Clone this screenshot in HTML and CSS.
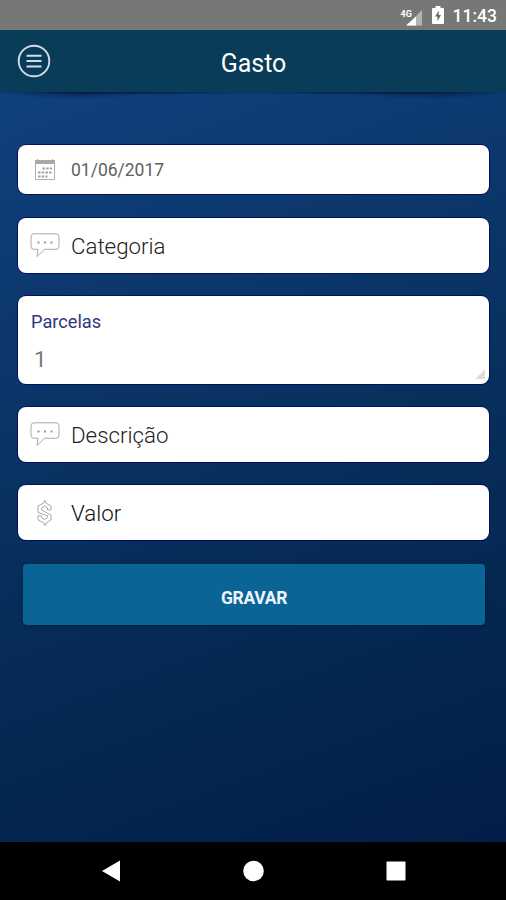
FILE: index.html
```
<!DOCTYPE html>
<html lang="pt-BR">
<head>
  <meta charset="UTF-8">
  <meta name="viewport" content="width=device-width, initial-scale=1">
  <title>Gasto</title>
  <link rel="stylesheet" href="styles.css">
</head>
<body>
  <div class="status-bar">
    <svg class="signal" width="24" height="20" viewBox="0 0 24 20">
      <path d="M22 2v15.500h-15z" fill="#b4b4b4"/>
      <path d="M16 8.500v9H6z" fill="#fff"/>
      <text x="0.5" y="8.700">4G</text>
    </svg>
    <svg class="battery" width="12" height="18" viewBox="0 0 12 18">
      <path d="M3.500 0h5v2H11q1 0 1 1v14q0 1-1 1H1q-1 0-1-1V3q0-1 1-1h2.500z" fill="#fff"/>
      <path d="M7 4.500L3 10.500h2.500V15L9 9H6.500z" fill="#666"/>
    </svg>
    <span class="clock">11:43</span>
  </div>

  <header class="header">
    <button class="menu" aria-label="Menu">
      <svg width="34" height="34" viewBox="0 0 34 34" fill="none" stroke="#d5dbe9">
        <circle cx="17" cy="17" r="15.300" stroke-width="1.900"/>
        <path d="M9.500 11.800h15M9.500 17.100h15M9.500 22.400h15" stroke-width="2"/>
      </svg>
    </button>
    <h1>Gasto</h1>
  </header>

  <form class="content">
    <div class="field date">
      <svg class="icon" width="30" height="26" viewBox="0 0 30 26">
        <path d="M5 3h20v4H5z" fill="#a8a8a8"/>
        <path d="M7.500 2v3M22.500 2v3" stroke="#a8a8a8"/>
        <path d="M5.500 7v15.500h19V7" fill="none" stroke="#b0b0b0"/>
        <path d="M12.500 11.500h9.500M8 15.500h14M8 19.500h9.500" stroke="#a2a2a2" stroke-width="2" stroke-dasharray="2.500 1.200" fill="none"/>
      </svg>
      <input type="text" value="01/06/2017">
    </div>

    <div class="field">
      <svg class="icon" width="30" height="26" viewBox="0 0 30 26">
        <path class="line" d="M4 .8h22q3 0 3 3v9.500q0 3-3 3H14.500L7 23.500l1-7.200H4q-3 0-3-3V3.800q0-3 3-3z"/>
        <path d="M7.500 9.500h2M14 9.500h2M20.500 9.500h2" stroke="#999" stroke-width="1.800"/>
      </svg>
      <input type="text" placeholder="Categoria">
    </div>

    <div class="field parcels">
      <label for="parcelas">Parcelas</label>
      <input type="text" id="parcelas" value="1">
      <span class="corner"></span>
    </div>

    <div class="field">
      <svg class="icon" width="30" height="26" viewBox="0 0 30 26">
        <path class="line" d="M4 .8h22q3 0 3 3v9.500q0 3-3 3H14.500L7 23.500l1-7.200H4q-3 0-3-3V3.800q0-3 3-3z"/>
        <path d="M7.500 9.500h2M14 9.500h2M20.500 9.500h2" stroke="#999" stroke-width="1.800"/>
      </svg>
      <input type="text" placeholder="Descrição">
    </div>

    <div class="field value">
      <svg class="icon" width="30" height="26" viewBox="0 0 30 26">
        <path class="line" d="M14 .8h1.500v2l5.500 3.200v4h-3.500V8l-3-1.800-3 1.800v2l9.500 5v5l-5 3v2h-2v-2l-6-3.200v-4H11.500v2l3 1.800 3-1.800v-2L8 12.500V6l6-3.200z"/>
      </svg>
      <input type="text" placeholder="Valor">
    </div>

    <button type="button" class="save">GRAVAR</button>
  </form>

  <nav class="nav-bar">
    <svg width="20" height="22" viewBox="0 0 20 22"><path d="M1 11L19 .5v21z"/></svg>
    <svg width="22" height="22" viewBox="0 0 22 22"><circle cx="10.500" cy="11" r="10.300"/></svg>
    <svg width="20" height="20" viewBox="0 0 20 20"><rect x=".5" y=".5" width="19" height="19" rx="1"/></svg>
  </nav>
</body>
</html>
```
FILE: styles.css
```
* {
  box-sizing: border-box;
}
body {
  display: flex;
  flex-direction: column;
  height: 100vh;
  margin: 0;
  overflow: hidden;
  background: linear-gradient(160deg, #10407f 8%, #08315f 48%, #042850 70%, #021c46 100%);
  font-family: Roboto, sans-serif;
}
.status-bar {
  display: flex;
  align-items: center;
  justify-content: flex-end;
  height: 30px;
  padding-right: 9px;
  background-color: #777;
  color: #fff;
}
.signal {
  margin: 5px 8px 0 0;
}
.signal text {
  fill: #fff;
  font-size: 9px;
  font-weight: 700;
}
.battery {
  margin-right: 9px;
}
.clock {
  font-size: 17.5px;
  font-weight: 500;
  line-height: 30px;
  padding-top: 2px;
}
.header {
  position: relative;
  display: grid;
  grid-template-columns: 51px 1fr 51px;
  align-items: center;
  height: 62px;
  background-color: #093c59;
}
/* curved shadow under the header */
.header::after {
  content: "";
  position: absolute;
  top: 100%;
  left: 0;
  width: 100%;
  height: 9px;
  background:
    radial-gradient(ellipse 75px 8px at 15% 0, rgba(0, 15, 40, 0.45), transparent),
    radial-gradient(ellipse 75px 8px at 85% 0, rgba(0, 15, 40, 0.45), transparent),
    radial-gradient(ellipse 150px 3px at 26% 0, rgba(0, 15, 40, 0.7), transparent),
    radial-gradient(ellipse 150px 3px at 74% 0, rgba(0, 15, 40, 0.7), transparent);
}
.menu {
  padding: 0 0 0 17px;
  border: none;
  background: none;
}
.menu svg {
  display: block;
}
h1 {
  margin: 4px 0 0 1px;
  color: #fff;
  font-size: 25px;
  font-weight: 400;
  text-align: center;
}
.content {
  flex: 1;
  padding: 53px 17px 0 18px;
}
.field {
  position: relative;
  display: flex;
  align-items: center;
  height: 55px;
  margin-bottom: 23px;
  padding-left: 12px;
  border-radius: 8px;
  background-color: #fff;
  box-shadow: 0 0 0 1px rgba(0, 0, 95, 0.7);
}
.field input {
  flex: 1;
  min-width: 0;
  margin-left: 11px;
  padding: 1px 0 0;
  border: none;
  outline: none;
  background: none;
  color: #555;
  font: 300 22.3px Roboto, sans-serif;
}
.field input::placeholder {
  color: #222;
  opacity: 1;
}
.date {
  height: 49px;
  margin-bottom: 24px;
}
.field.date input {
  color: #606060;
  font-size: 17.5px;
  font-weight: 400;
}
.line {
  fill: none;
  stroke: #aaa;
  stroke-width: 1;
}
.parcels {
  display: block;
  height: 88px;
  padding: 15px 13px;
}
.parcels label {
  display: block;
  color: #303681;
  font-size: 18.2px;
  line-height: 21px;
}
.field.parcels input {
  display: block;
  width: 100%;
  height: 28px;
  margin: 12px 0 0 3px;
  color: #777;
  font-weight: 400;
}
.corner {
  position: absolute;
  right: 4px;
  bottom: 5px;
  border: 5px solid transparent;
  border-right-color: #ddd;
  border-bottom-color: #ddd;
}
.value input::placeholder {
  color: #111;
}
.save {
  display: block;
  width: 462px;
  height: 61px;
  margin: 24px 0 0 5px;
  padding: 6px 0 0;
  border: none;
  border-radius: 4px;
  background-color: #0b6496;
  box-shadow: 0 1px 4px rgba(0, 0, 40, 0.3);
  color: #edf4ff;
  font: 700 17.5px Roboto, sans-serif;
  letter-spacing: -0.3px;
}
.nav-bar {
  display: flex;
  align-items: center;
  justify-content: space-between;
  height: 58px;
  padding: 0 100px 0 101px;
  background-color: #000;
}
.nav-bar svg {
  fill: #fff;
}
```
